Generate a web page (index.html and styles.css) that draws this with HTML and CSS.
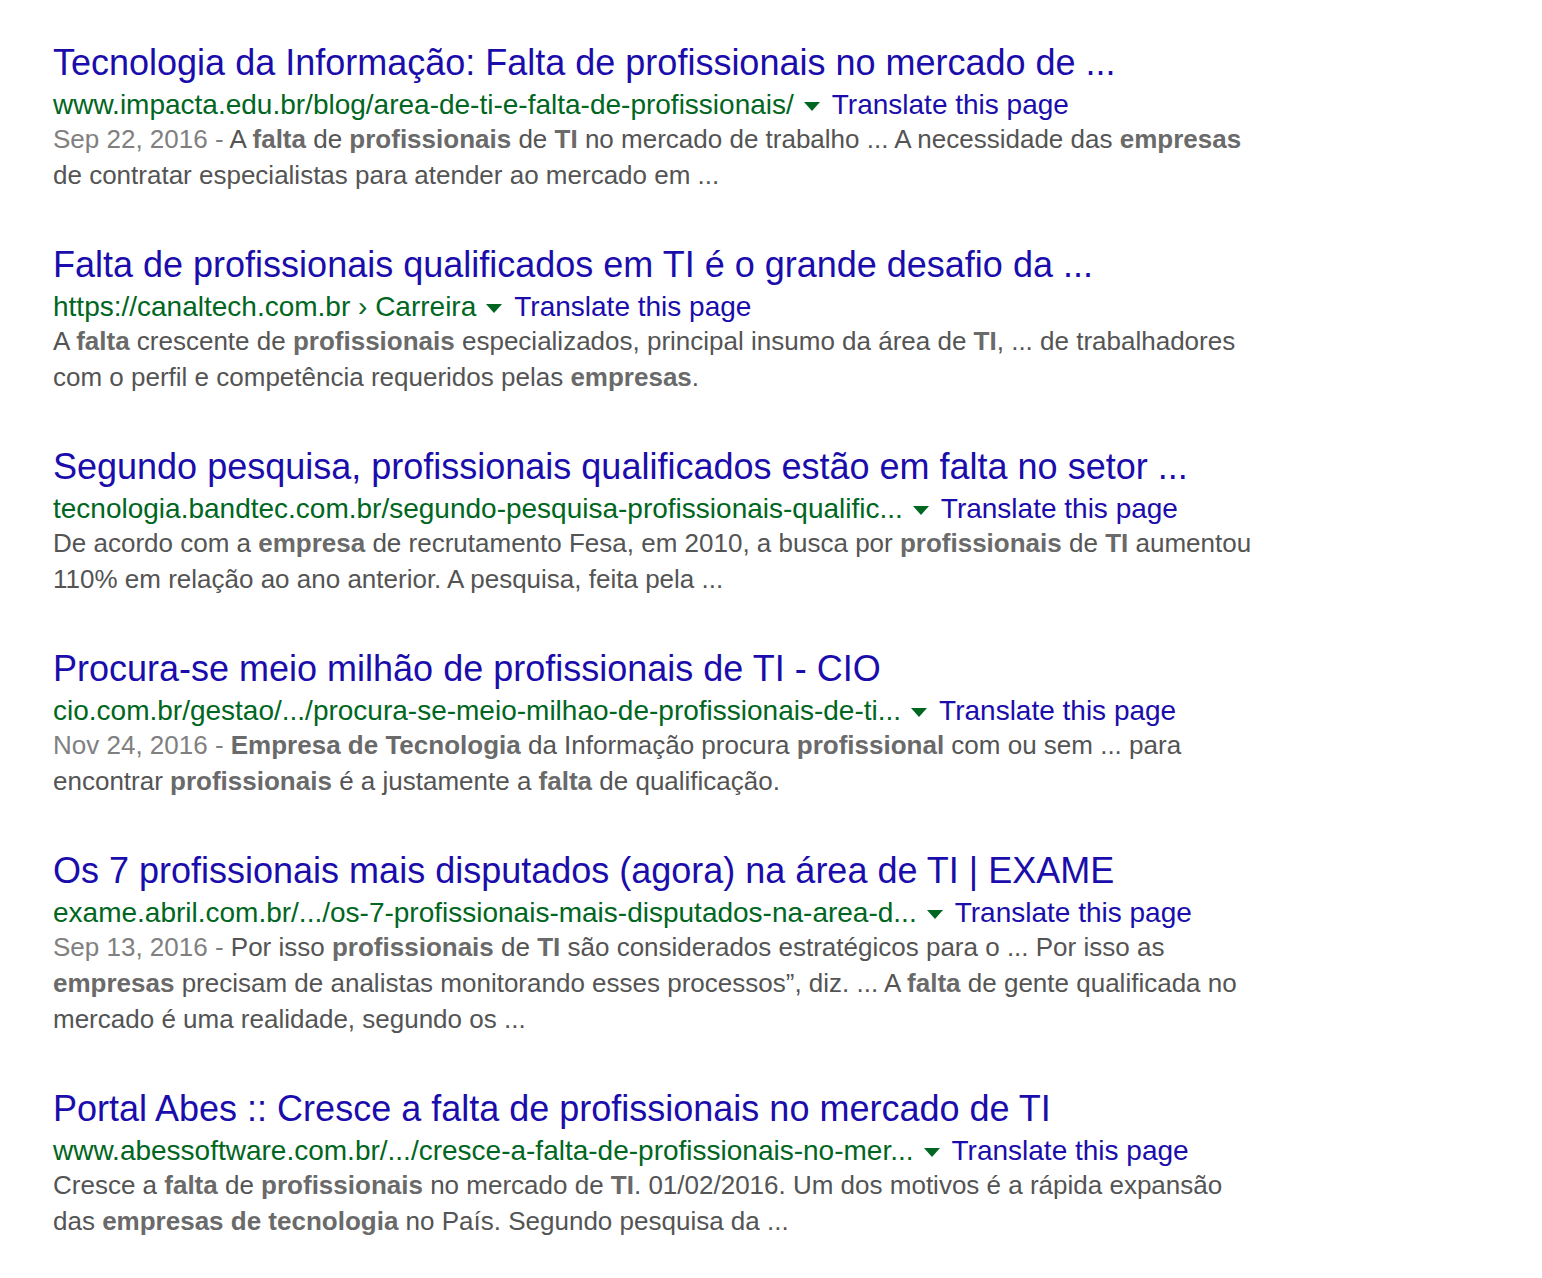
FILE: index.html
```html
<!DOCTYPE html>
<html lang="pt">
<head>
    <meta charset="UTF-8">
    <title>falta de profissionais de TI nas empresas</title>
    <link rel="stylesheet" href="styles.css">
</head>
<body>
    <div class="results">
        <div class="result">
            <h3 class="result-title"><a href="#">Tecnologia da Informação: Falta de profissionais no mercado de ...</a></h3>
            <div class="result-url">
                <cite>www.impacta.edu.br/blog/area-de-ti-e-falta-de-profissionais/</cite>
                <span class="url-arrow"></span>
                <a href="#" class="translate">Translate this page</a>
            </div>
            <div class="result-snippet"><span class="date">Sep 22, 2016 - </span>A <b>falta</b> de <b>profissionais</b> de <b>TI</b> no mercado de trabalho ... A necessidade das <b>empresas</b> de contratar especialistas para atender ao mercado em ...</div>
        </div>

        <div class="result">
            <h3 class="result-title"><a href="#">Falta de profissionais qualificados em TI é o grande desafio da ...</a></h3>
            <div class="result-url">
                <cite>https://canaltech.com.br › Carreira</cite>
                <span class="url-arrow"></span>
                <a href="#" class="translate">Translate this page</a>
            </div>
            <div class="result-snippet">A <b>falta</b> crescente de <b>profissionais</b> especializados, principal insumo da área de <b>TI</b>, ... de trabalhadores com o perfil e competência requeridos pelas <b>empresas</b>.</div>
        </div>

        <div class="result">
            <h3 class="result-title"><a href="#">Segundo pesquisa, profissionais qualificados estão em falta no setor ...</a></h3>
            <div class="result-url">
                <cite>tecnologia.bandtec.com.br/segundo-pesquisa-profissionais-qualific...</cite>
                <span class="url-arrow"></span>
                <a href="#" class="translate">Translate this page</a>
            </div>
            <div class="result-snippet">De acordo com a <b>empresa</b> de recrutamento Fesa, em 2010, a busca por <b>profissionais</b> de <b>TI</b> aumentou 110% em relação ao ano anterior. A pesquisa, feita pela ...</div>
        </div>

        <div class="result">
            <h3 class="result-title"><a href="#">Procura-se meio milhão de profissionais de TI - CIO</a></h3>
            <div class="result-url">
                <cite>cio.com.br/gestao/.../procura-se-meio-milhao-de-profissionais-de-ti...</cite>
                <span class="url-arrow"></span>
                <a href="#" class="translate">Translate this page</a>
            </div>
            <div class="result-snippet"><span class="date">Nov 24, 2016 - </span><b>Empresa de Tecnologia</b> da Informação procura <b>profissional</b> com ou sem ... para encontrar <b>profissionais</b> é a justamente a <b>falta</b> de qualificação.</div>
        </div>

        <div class="result">
            <h3 class="result-title"><a href="#">Os 7 profissionais mais disputados (agora) na área de TI | EXAME</a></h3>
            <div class="result-url">
                <cite>exame.abril.com.br/.../os-7-profissionais-mais-disputados-na-area-d...</cite>
                <span class="url-arrow"></span>
                <a href="#" class="translate">Translate this page</a>
            </div>
            <div class="result-snippet"><span class="date">Sep 13, 2016 - </span>Por isso <b>profissionais</b> de <b>TI</b> são considerados estratégicos para o ... Por isso as <b>empresas</b> precisam de analistas monitorando esses processos”, diz. ... A <b>falta</b> de gente qualificada no mercado é uma realidade, segundo os ...</div>
        </div>

        <div class="result">
            <h3 class="result-title"><a href="#">Portal Abes :: Cresce a falta de profissionais no mercado de TI</a></h3>
            <div class="result-url">
                <cite>www.abessoftware.com.br/.../cresce-a-falta-de-profissionais-no-mer...</cite>
                <span class="url-arrow"></span>
                <a href="#" class="translate">Translate this page</a>
            </div>
            <div class="result-snippet">Cresce a <b>falta</b> de <b>profissionais</b> no mercado de <b>TI</b>. 01/02/2016. Um dos motivos é a rápida expansão das <b>empresas de tecnologia</b> no País. Segundo pesquisa da ...</div>
        </div>
    </div>
</body>
</html>
```

FILE: styles.css
```css
body {
    margin: 0;
    padding: 41px 0 0 53px;
    background-color: #fff;
    font-family: "Liberation Sans", Arial, sans-serif;
}

.results {
    width: 1200px;
}

.result {
    margin-bottom: 50px;
}

.result-title {
    margin: 0 0 4px;
    font-size: 36px;
    font-weight: normal;
    line-height: 44px;
}

.result-title a {
    color: #1a0dab;
    text-decoration: none;
}

.result-url {
    display: flex;
    align-items: center;
    font-size: 28px;
    line-height: 32px;
    white-space: nowrap;
}

.result-url cite {
    color: #006621;
    font-style: normal;
}

.url-arrow {
    width: 0;
    height: 0;
    margin: 2px 12px 0 10px;
    border-left: 8px solid transparent;
    border-right: 8px solid transparent;
    border-top: 9px solid #006621;
}

.translate {
    color: #1a0dab;
    text-decoration: none;
}

.result-snippet {
    font-size: 26px;
    line-height: 36px;
    color: #545454;
}

.result-snippet b {
    color: #6a6a6a;
}

.date {
    color: #808080;
}
```
